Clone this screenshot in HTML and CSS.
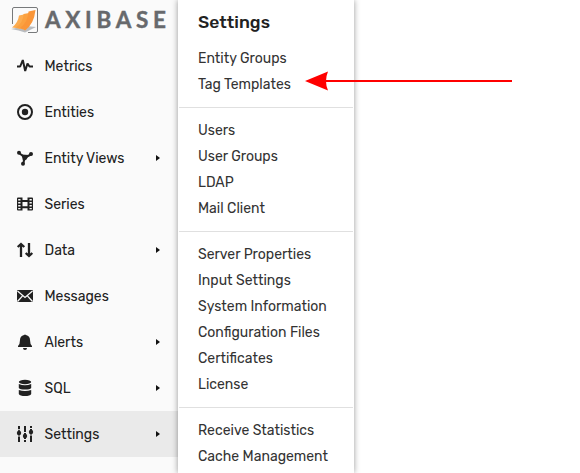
FILE: index.html
```html
<!DOCTYPE html>
<html lang="en">
<head>
<meta charset="utf-8">
<title>Axibase Settings</title>
<link rel="stylesheet" href="styles.css">
</head>
<body>
<div class="app">
  <aside class="sidebar">
    <div class="brand">
      <svg class="brand-mark" viewBox="0 0 28 28" width="28" height="28">
        <path d="M1.500 18V3Q1.500 1.500 3 1.500H25Q26.500 1.500 26.500 3V25Q26.500 26.500 25 26.500H17" fill="none" stroke="#77797b"/>
        <path d="M0 23L15 20L25 21L14 26.500Q8 24 0 23Z" fill="#b9bcc0"/>
        <path d="M1 21.500Q7 17 8 9.500L13 8.500Q13 17 9 23Q5 21.500 1 21.500Z" fill="#fcac50"/>
        <path d="M5 21.500Q12 17 12.500 8L18 7Q17.500 17 12 23.500Q9 22 5 21.500Z" fill="#fba140"/>
        <path d="M9 22Q17 16 17.500 5.500L24.500 4Q23 18 14 24.500Q12 22.500 9 22Z" fill="#fa9638"/>
      </svg>
      <span class="brand-name">AXIBASE</span>
    </div>
    <nav class="nav">
      <a class="nav-item"><svg class="icon" viewBox="0 0 16 16"><path d="M0 8.500H3.200L5.800 2L8.200 13L10.500 5.500L12.500 8.500H16" class="line bevel"/></svg><span>Metrics</span></a>
      <a class="nav-item"><svg class="icon" viewBox="0 0 16 16"><circle cx="8" cy="8" r="7" class="line"/><circle cx="8" cy="8" r="3.200"/></svg><span>Entities</span></a>
      <a class="nav-item more"><svg class="icon" viewBox="0 0 16 16"><path d="M2 3L8 7.500L14 4.500M8 7.500L6 14" class="line"/><path d="M4.500 4.500L12 5L9.500 9.500L6 11Z"/><circle cx="2" cy="2.700" r="2"/><circle cx="14" cy="4" r="2"/><circle cx="6" cy="13.800" r="2"/></svg><span>Entity Views</span></a>
      <a class="nav-item"><svg class="icon" viewBox="0 0 16 16"><path fill-rule="evenodd" d="M1 1.500H15Q16 1.500 16 2.500V13.500Q16 14.500 15 14.500H1Q0 14.500 0 13.500V2.500Q0 1.500 1 1.500ZM1.200 3V4.500H3.500V3ZM1.200 6V7.500H3.500V6ZM1.200 9V10.500H3.500V9ZM1.200 12V13.300H3.500V12ZM12.500 3V4.500H14.800V3ZM12.500 6V7.500H14.800V6ZM12.500 9V10.500H14.800V9ZM12.500 12V13.300H14.800V12ZM5.500 1.500V4H10.500V1.500ZM5.500 6V10.300H10.500V6ZM5.500 12.300V14.500H10.500V12.300Z"/></svg><span>Series</span></a>
      <a class="nav-item more"><svg class="icon" viewBox="0 0 16 16"><path d="M4 15V2.500M.7 5L4 2L7.300 5M12 1V13.500M8.700 11L12 14L15.300 11" class="line thick"/></svg><span>Data</span></a>
      <a class="nav-item"><svg class="icon" viewBox="0 0 16 16"><rect y="2" width="16" height="12" rx="1"/><path d="M.5 3L8 9.500L15.500 3M.5 13.500L5.800 7.600M15.500 13.500L10.200 7.600" class="cut"/></svg><span>Messages</span></a>
      <a class="nav-item more"><svg class="icon" viewBox="0 0 16 16"><path d="M7 1Q8 0 9 1Q13 2 13 6Q13 10 15 12V13H1V12Q3 10 3 6Q3 2 7 1ZM6 14H10Q10 16 8 16Q6 16 6 14Z"/></svg><span>Alerts</span></a>
      <a class="nav-item more"><svg class="icon" viewBox="0 0 16 16"><ellipse cx="8" cy="2" rx="6.200" ry="2.200"/><path d="M1.800 4Q8 6.400 14.200 4V8Q13 9.500 8 9.500Q3 9.500 1.800 8ZM1.800 10Q8 12.200 14.200 10V14Q13 16 8 16Q3 16 1.800 14Z"/></svg><span>SQL</span></a>
      <a class="nav-item more active"><svg class="icon" viewBox="0 0 16 16"><path d="M2 0V16M8 0V16M14 0V16" class="line"/><path d="M0 3.700H5M0 10H5M11 9H16M11 2.500H16M5 13.500H11M5 6.500H11" class="slot"/><circle cx="2" cy="7" r="2.200"/><circle cx="8" cy="10" r="2.200"/><circle cx="14" cy="6" r="2.200"/></svg><span>Settings</span></a>
    </nav>
  </aside>
  <section class="panel">
    <h1 class="panel-title">Settings</h1>
    <ul class="group">
      <li>Entity Groups</li><li>Tag Templates</li>
    </ul>
    <ul class="group">
      <li>Users</li><li>User Groups</li><li>LDAP</li><li>Mail Client</li>
    </ul>
    <ul class="group">
      <li>Server Properties</li><li>Input Settings</li><li>System Information</li><li>Configuration Files</li><li>Certificates</li><li>License</li>
    </ul>
    <ul class="group">
      <li>Receive Statistics</li><li>Cache Management</li>
    </ul>
  </section>
  <svg class="pointer" viewBox="0 0 208 20" width="208" height="20"><path d="M18 10H207" stroke="#f00" stroke-width="2"/><path d="M0 10L23 .5Q19 10 23 19.500Z" fill="#f00"/></svg>
</div>
</body>
</html>
```
FILE: styles.css
```css
* { box-sizing: border-box; }
body { margin: 0; background: #fff; color: #212121; font: 14px/26px Rubik, Roboto, sans-serif; overflow: hidden; }
.app { display: flex; height: 473px; position: relative; overflow: hidden; }
.sidebar { width: 178px; background: #fafafa; }
.brand { display: flex; height: 43px; padding: 6px 0 0 11px; }
.brand-mark { flex: none; }
.brand-name { margin-left: 6px; color: #67696c; font: 700 22.5px/27px Lato, sans-serif; letter-spacing: 4.7px; -webkit-text-stroke: .4px #67696c; }
.nav-item { display: flex; align-items: center; height: 46px; padding: 0 18px 0 17px; }
.nav-item span { padding-top: 2px; }
.nav-item.active { background: #eaeaea; }
.icon { width: 16px; height: 16px; margin-right: 11.5px; fill: #212121; overflow: visible; }
.line { fill: none; stroke: #212121; stroke-width: 2; }
.thick { stroke-width: 2.3; }
.bevel { stroke-linejoin: bevel; }
.cut { fill: none; stroke: #fafafa; stroke-width: 1.3; }
.slot { fill: none; stroke: #eaeaea; stroke-width: 1; }
.more::after { content: ""; margin-left: auto; width: 4px; height: 6px; background: #111; clip-path: polygon(0 0, 100% 50%, 0 100%); }
.panel { width: 176px; background: #fff; box-shadow: 0 0 6px rgba(0, 0, 0, .4); padding: 9px 1px 0; z-index: 1; }
.panel-title { margin: 0 0 11px; padding-left: 19px; font: 500 17.5px/26px Rubik, Roboto, sans-serif; }
.group { list-style: none; margin: 0; padding: 0 0 9px 19px; color: #333; }
.group + .group { border-top: 1px solid #e0e0e0; padding-top: 10px; }
.pointer { position: absolute; left: 305px; top: 71px; z-index: 2; }
```
